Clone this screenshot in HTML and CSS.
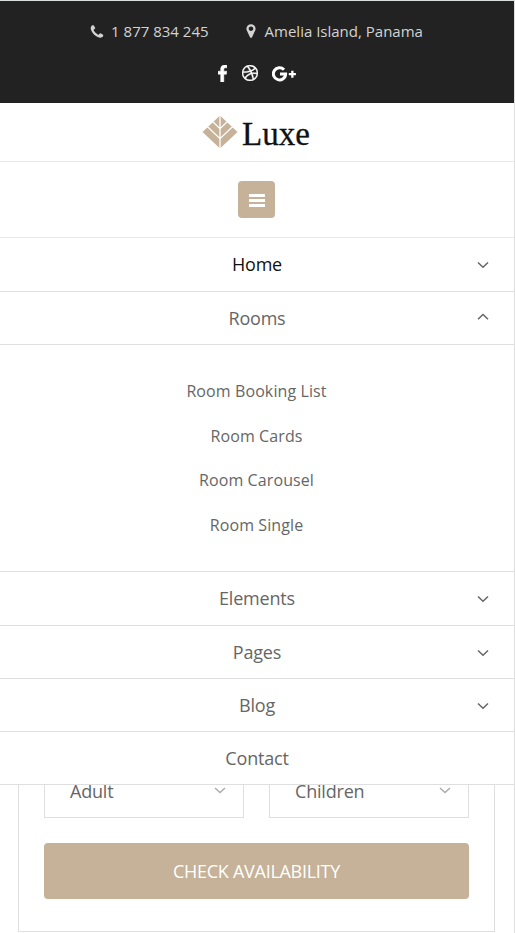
FILE: index.html
```html
<!DOCTYPE html>
<html lang="en">
<head>
<meta charset="utf-8">
<title>Luxe</title>
<link rel="stylesheet" href="styles.css">
</head>
<body>
<div class="page">
  <header class="header">
    <div class="topbar">
      <div class="contacts">
        <span class="contact"><svg class="ico phone" viewBox="0 0 1792 1792"><path d="M1600 1240q0 27-10 70.500t-21 68.500q-21 50-122 106-94 51-186 51-27 0-53-3.500t-57.500-12.500-47-14.500-55.500-20.500-49-18q-98-35-175-83-127-79-264-216t-216-264q-48-77-83-175-3-9-18-49t-20.500-55.500-14.500-47-12.500-57.500-3.500-53q0-92 51-186 56-101 106-122 25-11 68.500-21t70.500-10q14 0 21 3 18 6 53 76 11 19 30 54t35 63.500 31 53.500q3 4 17.500 25t21.500 35.500 7 28.500q0 20-28.500 50t-62 55-62 53-28.500 46q0 9 5 22.500t8.500 20.500 14 24 11.500 19q76 137 174 235t235 174q2 1 19 11.500t24 14 20.500 8.500 22.500 5q18 0 46-28.500t53-62 55-62 50-28.500q14 0 28.500 7t35.500 21.500 25 17.500q25 15 53.500 31t63.500 35 54 30q70 35 76 53 3 7 3 21z"/></svg>1 877 834 245</span>
        <span class="contact"><svg class="ico" viewBox="0 0 1792 1792"><path d="M1152 640q0-106-75-181t-181-75-181 75-75 181 75 181 181 75 181-75 75-181zm256 0q0 109-33 179l-364 774q-16 33-47.500 52t-67.500 19-67.500-19-46.500-52l-365-774q-33-70-33-179 0-212 150-362t362-150 362 150 150 362z"/></svg>Amelia Island, Panama</span>
      </div>
      <div class="social">
        <svg class="fb" viewBox="479 0 864 1664"><path d="M1343 12v264h-157q-86 0-116 36t-30 108v189h293l-39 296h-254v759h-306v-759h-255v-296h255v-218q0-186 104-288.500t277-102.500q147 0 228 12z"/></svg>
        <svg class="dr" viewBox="128 128 1536 1536"><path d="M1152 1500q-42-241-140-498h-2l-2 1q-16 6-43 16.500t-101 49-137 82-131 114.500-103 148l-15-11q184 150 418 150 132 0 256-52zm-185-607q-21-49-53-111-311 93-673 93-1 7-1 21 0 124 44 236.500t124 201.500q50-89 123.500-166.500t142.500-124.500 130.500-81 99.500-48l37-13q4-1 13-3.500t13-4.500zm-107-212q-120-213-244-378-138 65-234 186t-128 272q302 0 606-80zm684 319q-210-60-409-29 87 239 128 469 111-75 185-189.500t96-250.500zm-805-741q-1 0-2 1 1-1 2-1zm590 145q-185-164-433-164-76 0-155 19 131 170 246 382 69-26 130-60.500t96.500-61.500 65.500-57 37.500-40.500zm223 485q-3-232-149-410l-1 1q-9 12-19 24.500t-43.500 44.500-71 60.500-100 65-131.500 64.500q25 53 44 95 2 6 6.500 17.500t7.500 16.500q36-5 74.500-7t73.500-2 69 1.500 64 4 56.500 5.500 48 6.500 36.500 6 25 4.500zm112 7q0 209-103 385.500t-279.500 279.500-385.500 103-385.500-103-279.500-279.500-103-385.500 103-385.500 279.500-279.500 385.500-103 385.500 103 279.500 279.500 103 385.500z"/></svg>
        <svg class="gp" viewBox="0 0 25 16"><path class="line" d="M12 3.700A6.100 6.100 0 1 0 13.600 7.900H8"/><path d="M19.200 4.700h2.300v2.300h2.400v2.300h-2.400v2.400h-2.300V9.300h-2.400V7h2.400z"/></svg>
      </div>
    </div>
    <div class="brand">
      <svg class="mark" viewBox="0 0 36 34"><path class="leaf" d="M18 .5 35.500 17 18 33.500.5 17z"/><path class="vein" d="M18 0V34M10.500 6.500 18 13.600l7.500-7.100M5 11.200 18 23.700l13-12.500"/></svg>
      <span class="name">Luxe</span>
    </div>
    <div class="toggle-row">
      <button class="toggle" aria-label="Menu"><i></i><i></i><i></i></button>
    </div>
    <nav class="menu">
      <a class="item active">Home<svg class="arrow" viewBox="0 0 12 8"><path d="M1 1.500 6 6.300l5-4.800"/></svg></a>
      <a class="item short">Rooms<svg class="arrow up" viewBox="0 0 12 8"><path d="M1 6.300 6 1.500l5 4.800"/></svg></a>
      <div class="submenu"><a>Room Booking List</a><a>Room Cards</a><a>Room Carousel</a><a>Room Single</a></div>
      <a class="item">Elements<svg class="arrow" viewBox="0 0 12 8"><path d="M1 1.500 6 6.300l5-4.800"/></svg></a>
      <a class="item short">Pages<svg class="arrow" viewBox="0 0 12 8"><path d="M1 1.500 6 6.300l5-4.800"/></svg></a>
      <a class="item short">Blog<svg class="arrow" viewBox="0 0 12 8"><path d="M1 1.500 6 6.300l5-4.800"/></svg></a>
      <a class="item short">Contact</a>
    </nav>
  </header>
  <section class="booking">
    <div class="selects">
      <div class="select">Adult<svg viewBox="0 0 12 8"><path d="M1 1 6 5.500 11 1"/></svg></div>
      <div class="select">Children<svg viewBox="0 0 12 8"><path d="M1 1 6 5.500 11 1"/></svg></div>
    </div>
    <button class="check">CHECK AVAILABILITY</button>
  </section>
</div>
</body>
</html>
```
FILE: styles.css
```css
* { box-sizing: border-box; }
body {
  margin: 0;
  background: #fff;
  color: #666;
  font-family: "Open Sans", "Noto Sans", sans-serif;
  overflow: hidden;
}
button { border: 0; font: inherit; }
.page {
  width: 515px;
  height: 933px;
  border-top: 1px solid #dcdfde;
  border-right: 1px solid #dfdfe0;
  overflow: hidden;
}
.header { position: relative; z-index: 2; background: #fff; }
.topbar { height: 102px; padding-top: 18px; background: #222; }
.contacts {
  display: flex;
  justify-content: center;
  gap: 34px;
  height: 24px;
  line-height: 24px;
  font-size: 15px;
  color: #d3d3d3;
  padding-right: 2px;
}
.contact { display: flex; align-items: center; gap: 6px; }
.ico { width: 16px; height: 16px; fill: #d3d3d3; }
.phone { margin-top: 2px; }
.social {
  display: flex;
  justify-content: center;
  align-items: center;
  gap: 15px;
  height: 18px;
  margin-top: 21px;
  padding-left: 1px;
  fill: #fff;
}
.fb { width: 9px; height: 17px; stroke: #fff; stroke-width: 50px; }
.dr { width: 16px; height: 16px; stroke: #fff; stroke-width: 40px; margin-right: -1px; }
.gp { width: 25px; height: 16px; margin-top: 1px; }
.line { fill: none; stroke: #fff; stroke-width: 3; }
.brand {
  display: flex;
  justify-content: center;
  align-items: center;
  gap: 4px;
  height: 59px;
  padding-right: 2px;
  border-bottom: 1px solid #e8e8e8;
}
.mark { width: 36px; height: 34px; }
.leaf { fill: #c6b299; }
.vein { fill: none; stroke: #fff; stroke-width: 1.3; }
.name {
  margin-top: 3px;
  font-family: "Liberation Serif", serif;
  font-size: 33px;
  line-height: 58px;
  color: #111;
  -webkit-text-stroke: 0.300px #111;
}
.toggle-row {
  display: flex;
  justify-content: center;
  padding: 19px 2px 19px 0;
  height: 76px;
  border-bottom: 1px solid #e8e8e8;
}
.toggle {
  display: flex;
  flex-direction: column;
  align-items: center;
  justify-content: center;
  gap: 2px;
  width: 37px;
  height: 37px;
  padding: 2px 0 0 1px;
  border-radius: 4px;
  background: #c6b299;
}
.toggle i { width: 16px; height: 3px; background: #fff; }
.item {
  display: block;
  position: relative;
  height: 54px;
  line-height: 53px;
  border-bottom: 1px solid #dfdfdf;
  text-align: center;
  font-size: 18px;
  letter-spacing: -0.200px;
}
.short { height: 53px; }
.active { color: #111; }
.arrow {
  position: absolute;
  right: 25px;
  top: 23px;
  width: 12px;
  height: 8px;
  fill: none;
  stroke: #666;
  stroke-width: 1.5;
}
.up { top: 21px; }
.submenu {
  height: 227px;
  padding: 24px 1px 0 0;
  border-bottom: 1px solid #dfdfdf;
  text-align: center;
  font-size: 16px;
  letter-spacing: 0.100px;
}
.submenu a { display: block; height: 44.600px; line-height: 44.600px; }
.booking {
  width: 477px;
  height: 190px;
  margin: -43px 0 0 18px;
  padding: 20px 25px 0;
  border: 1px solid #dfdfdf;
}
.selects { display: flex; gap: 25px; }
.select {
  display: flex;
  justify-content: space-between;
  align-items: center;
  width: 200px;
  height: 55px;
  padding: 0 17px 0 25px;
  border: 1px solid #dfdfdf;
  font-size: 18px;
  letter-spacing: -0.200px;
}
.select svg { width: 12px; height: 8px; fill: none; stroke: #aaa; stroke-width: 1.4; }
.check {
  display: block;
  width: 425px;
  height: 56px;
  margin-top: 25px;
  padding: 0;
  border-radius: 4px;
  background: #c6b299;
  color: #fff;
  font-size: 18px;
  letter-spacing: -0.280px;
}
```
